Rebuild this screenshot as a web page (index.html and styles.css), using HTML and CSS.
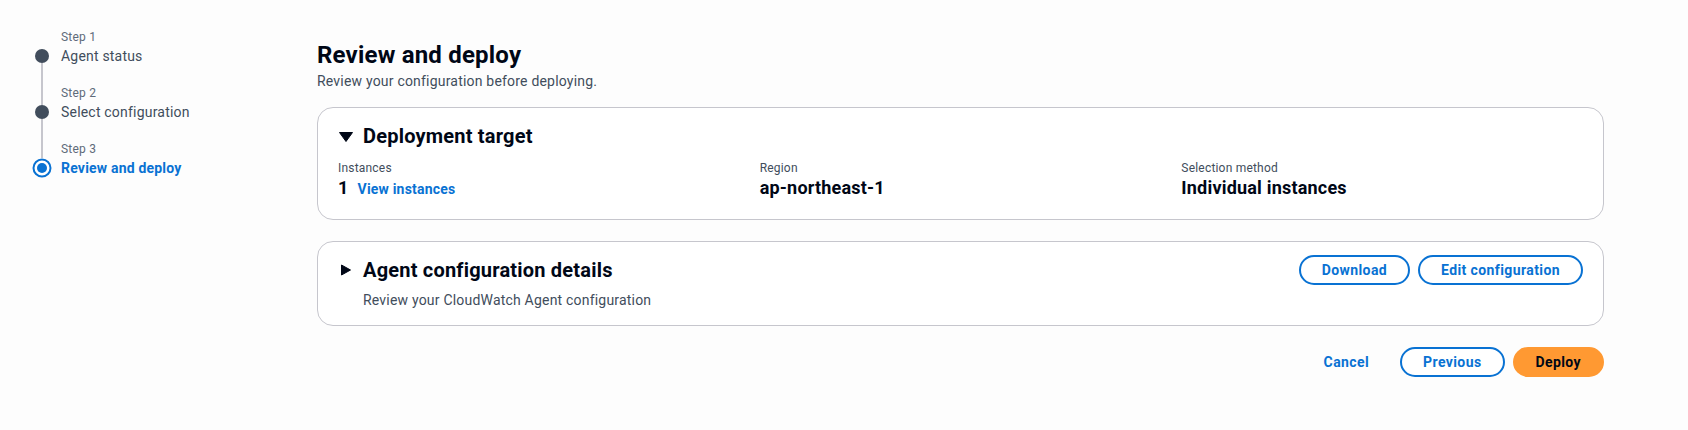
FILE: index.html
```html
<!DOCTYPE html>
<html lang="en">
<head>
<meta charset="utf-8">
<title>Review and deploy</title>
<link rel="stylesheet" href="styles.css">
</head>
<body>
<div class="page">
  <nav class="wizard-nav">
    <div class="step">
      <div class="rail"><span class="seg seg-top seg-hidden"></span><span class="dot"></span><span class="seg seg-bottom"></span></div>
      <div class="step-text"><div class="step-num">Step 1</div><div class="step-title">Agent status</div></div>
    </div>
    <div class="step">
      <div class="rail"><span class="seg seg-top"></span><span class="dot"></span><span class="seg seg-bottom"></span></div>
      <div class="step-text"><div class="step-num">Step 2</div><div class="step-title">Select configuration</div></div>
    </div>
    <div class="step step-active">
      <div class="rail"><span class="seg seg-top seg-short"></span>
        <svg class="dot-active" width="20" height="20" viewBox="0 0 20 20"><circle cx="10" cy="10" r="8.5" fill="#fff" stroke="#0972d3" stroke-width="2"/><circle cx="10" cy="10" r="5" fill="#0972d3"/></svg>
      </div>
      <div class="step-text"><div class="step-num">Step 3</div><div class="step-title">Review and deploy</div></div>
    </div>
  </nav>

  <main class="main">
    <h1 class="page-title">Review and deploy</h1>
    <p class="page-desc">Review your configuration before deploying.</p>

    <section class="card card-target">
      <div class="card-header">
        <svg class="caret" width="16" height="16" viewBox="0 0 16 16"><path d="M1.5 4.5h13L8 13.5z" fill="#000716" stroke="#000716" stroke-width="1" stroke-linejoin="round"/></svg>
        <h2 class="card-title">Deployment target</h2>
      </div>
      <div class="kv-grid">
        <div class="kv">
          <div class="kv-label">Instances</div>
          <div class="kv-value"><span>1</span><a class="link" href="#">View instances</a></div>
        </div>
        <div class="kv">
          <div class="kv-label">Region</div>
          <div class="kv-value">ap-northeast-1</div>
        </div>
        <div class="kv">
          <div class="kv-label">Selection method</div>
          <div class="kv-value">Individual instances</div>
        </div>
      </div>
    </section>

    <section class="card card-config">
      <div class="card-header-row">
        <div class="card-header">
          <svg class="caret" width="16" height="16" viewBox="0 0 16 16"><path d="M3.5 3L12.5 8L3.5 13z" fill="#000716" stroke="#000716" stroke-width="1" stroke-linejoin="round"/></svg>
          <h2 class="card-title">Agent configuration details</h2>
        </div>
        <div class="actions">
          <button class="btn btn-normal">Download</button>
          <button class="btn btn-normal">Edit configuration</button>
        </div>
      </div>
      <p class="card-desc">Review your CloudWatch Agent configuration</p>
    </section>

    <div class="footer-actions">
      <button class="btn btn-link">Cancel</button>
      <button class="btn btn-normal">Previous</button>
      <button class="btn btn-primary">Deploy</button>
    </div>
  </main>
</div>
</body>
</html>
```

FILE: styles.css
```css
* { box-sizing: border-box; }

body {
  margin: 0;
  background: #fdfdfd;
  font-family: Roboto, "Liberation Sans", Arial, sans-serif;
  letter-spacing: 0.2px;
  color: #000716;
  -webkit-font-smoothing: antialiased;
}

.page {
  display: flex;
  align-items: flex-start;
}

/* Wizard navigation */
.wizard-nav {
  width: 317px;
  flex: none;
  padding: 28px 0 0 32px;
  display: flex;
  flex-direction: column;
}

.step {
  display: flex;
  gap: 9px;
}

.rail {
  width: 20px;
  flex: none;
  display: flex;
  flex-direction: column;
  align-items: center;
}

.seg {
  width: 2px;
  background: #c6c6cd;
}

.seg-top { height: 21px; }
.seg-short { height: 18px; }
.seg-hidden { background: transparent; }
.seg-bottom { flex: 1; }

.dot {
  width: 14px;
  height: 14px;
  border-radius: 50%;
  background: #414d5c;
  flex: none;
}

.dot-active {
  display: block;
  flex: none;
}

.step-text {
  padding-bottom: 18px;
}

.step-num {
  font-size: 12px;
  line-height: 18px;
  color: #5f6b7a;
}

.step-title {
  font-size: 14px;
  line-height: 20px;
  color: #414d5c;
}

.step-active .step-title {
  color: #0972d3;
  font-weight: 700;
}

/* Main content */
.main {
  flex: 1;
  padding: 40px 84px 0 0;
}

.page-title {
  margin: 0;
  font-size: 24px;
  line-height: 30px;
  font-weight: 700;
  color: #000716;
}

.page-desc {
  margin: 1px 0 0;
  font-size: 14px;
  line-height: 20px;
  color: #414d5c;
}

.card {
  background: #ffffff;
  border: 1px solid #c6c6cd;
  border-radius: 16px;
}

.card-target {
  margin-top: 16px;
  padding: 16px 20px 19px;
}

.card-config {
  margin-top: 21px;
  padding: 13px 20px 15px;
}

.card-header {
  display: flex;
  align-items: center;
}

.caret {
  display: block;
  flex: none;
  margin-right: 9px;
}

.card-title {
  margin: 0;
  font-size: 20px;
  line-height: 24px;
  font-weight: 700;
  color: #000716;
}

.kv-grid {
  margin-top: 12px;
  display: grid;
  grid-template-columns: repeat(3, 1fr);
  gap: 20px;
}

.kv-label {
  font-size: 12px;
  line-height: 16px;
  color: #414d5c;
  margin-bottom: 1px;
}

.kv-value {
  font-size: 18px;
  line-height: 22px;
  font-weight: 700;
  color: #000716;
}

.link {
  margin-left: 9px;
  font-size: 14px;
  font-weight: 700;
  color: #0972d3;
  text-decoration: none;
}

.card-header-row {
  display: flex;
  align-items: center;
  justify-content: space-between;
}

.actions {
  display: flex;
  gap: 8px;
}

.card-desc {
  margin: 5px 0 0 25px;
  font-size: 14px;
  line-height: 20px;
  color: #414d5c;
}

/* Buttons */
.btn {
  font-family: inherit;
  font-size: 14px;
  line-height: 20px;
  font-weight: 700;
  letter-spacing: 0.4px;
  padding: 3px 21px;
  border: 2px solid transparent;
  border-radius: 20px;
  background: transparent;
  cursor: pointer;
}

.btn-normal {
  border-color: #0972d3;
  color: #0972d3;
  background: #ffffff;
}

.btn-link {
  color: #0972d3;
}

.btn-primary {
  background: #ff9932;
  border-color: #ff9932;
  color: #000716;
}

.footer-actions {
  margin-top: 21px;
  display: flex;
  justify-content: flex-end;
  gap: 8px;
}
```
